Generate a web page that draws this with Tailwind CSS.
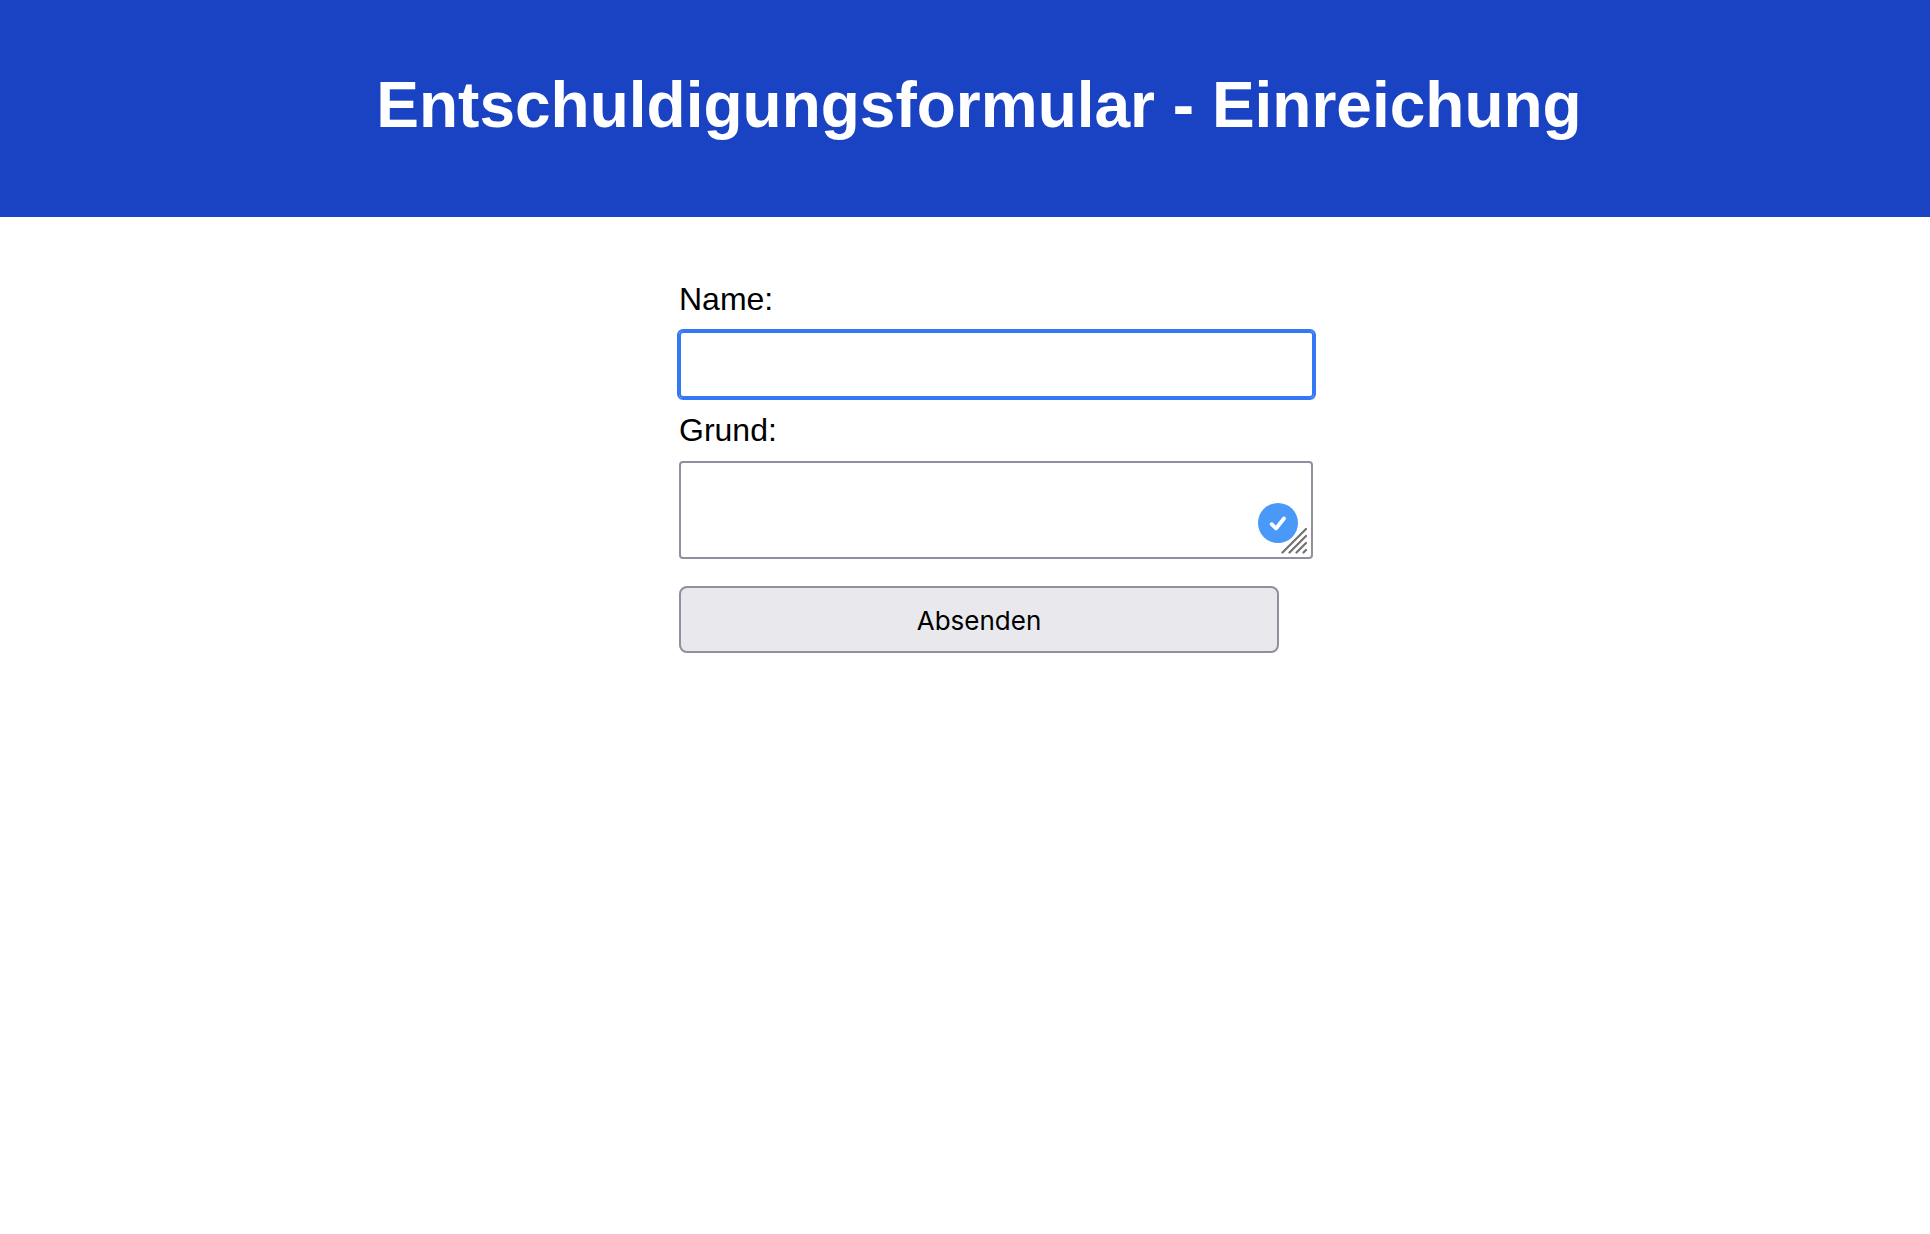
<!DOCTYPE html>
<html lang="de">
<head>
<meta charset="utf-8">
<meta name="viewport" content="width=device-width, initial-scale=1">
<title>Entschuldigungsformular</title>
<script src="https://cdn.jsdelivr.net/npm/@tailwindcss/browser@4"></script>
</head>
<body class="bg-white font-['Liberation_Sans',Arial,sans-serif] text-black">
<header class="bg-[#1a43c3] pt-[69px] pb-[76px] pl-7 text-center text-white">
  <h1 class="text-[64px] leading-[72px] font-bold">Entschuldigungsformular - Einreichung</h1>
</header>
<main class="flex justify-center pt-16 pl-7">
  <form class="flex w-[600px] flex-col items-start">
    <label for="name" class="text-[32px] leading-9">Name:</label>
    <input id="name" name="name" type="text" class="mt-[14px] h-[67px] w-[635px] rounded-sm border-2 border-[#3478f6] bg-white px-2 text-[26px] outline-2 outline-[#3478f6]">
    <label for="grund" class="mt-[14px] text-[32px] leading-9">Grund:</label>
    <div class="relative mt-[13px] w-[634px]">
      <textarea id="grund" name="grund" class="block h-[98px] w-full resize-none rounded-sm border-2 border-[#8f8f9d] bg-white px-2 text-[26px] outline-none"></textarea>
      <svg class="absolute right-[15px] bottom-4 size-10" viewBox="0 0 40 40" fill="none" aria-hidden="true">
        <circle cx="20" cy="20" r="20" fill="#4a98f8"/>
        <path d="M13.7 21.2 L18 25.5 L26 15.5" stroke="#fff" stroke-width="3.8" stroke-linecap="round" stroke-linejoin="round"/>
      </svg>
      <svg class="absolute right-[6px] bottom-[5px] size-[26px]" viewBox="0 0 26 26" fill="none" stroke="#727272" stroke-width="2.2" stroke-linecap="round" aria-hidden="true">
        <path d="M1.5 24.5 L25 1 M8.5 24.5 L25 8 M15.5 24.5 L25 15 M22.5 24.5 L25 22"/>
      </svg>
    </div>
    <button type="submit" class="mt-[27px] h-[67px] w-full rounded-lg border-2 border-[#8f8f9d] bg-[#e9e9ed] pt-0.5 font-['Inter',sans-serif] text-[26px]">Absenden</button>
  </form>
</main>
</body>
</html>
